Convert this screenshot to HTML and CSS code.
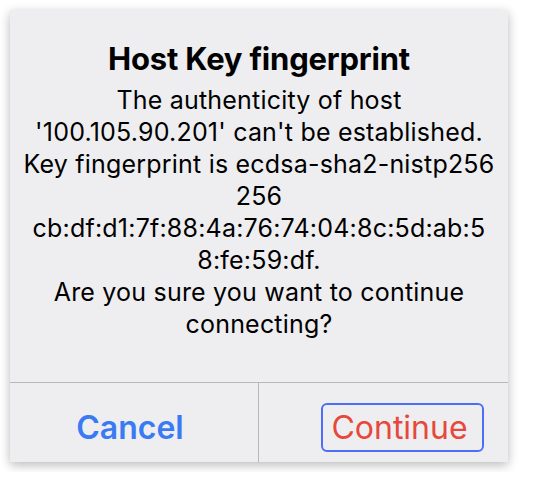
FILE: index.html
```html
<!DOCTYPE html>
<html lang="en">
<head>
    <meta charset="UTF-8">
    <meta name="viewport" content="width=device-width, initial-scale=1.0">
    <title>Host Key fingerprint</title>
    <link rel="stylesheet" href="styles.css">
</head>
<body>
    <div class="alert">
        <div class="alert-content">
            <h1 class="alert-title">Host Key fingerprint</h1>
            <p class="alert-message">
                The authenticity of host<br>
                '100.105.90.201' can't be established.<br>
                Key fingerprint is ecdsa-sha2-nistp256<br>
                256<br>
                cb:df:d1:7f:88:4a:76:74:04:8c:5d:ab:5<br>
                8:fe:59:df.<br>
                Are you sure you want to continue<br>
                connecting?
            </p>
        </div>
        <div class="alert-actions">
            <div class="action action-cancel">
                <button class="cancel-button">Cancel</button>
            </div>
            <div class="action action-continue">
                <button class="continue-button">Continue</button>
            </div>
        </div>
    </div>
</body>
</html>
```

FILE: styles.css
```css
body {
    margin: 0;
    padding: 10px;
    background-color: #ffffff;
    font-family: Inter, "Noto Sans", sans-serif;
}
.alert {
    width: 498px;
    height: 452px;
    background-color: #eeeef0;
    box-shadow: 0 3px 10px rgba(0,0,0,0.28);
    display: flex;
    flex-direction: column;
}
.alert-content {
    height: 372px;
    box-sizing: border-box;
    padding-top: 31px;
    text-align: center;
    color: #000;
}
.alert-title {
    margin: 0;
    font-size: 31px;
    line-height: 36px;
    font-weight: 700;
    letter-spacing: -0.2px;
}
.alert-message {
    margin: 7px 0 0;
    font-size: 25px;
    line-height: 32px;
    letter-spacing: 0.2px;
    white-space: nowrap;
}
.alert-actions {
    flex: 1;
    display: flex;
    border-top: 1px solid #b8b8bb;
}
.action {
    width: 50%;
    box-sizing: border-box;
    display: flex;
    align-items: center;
    justify-content: center;
    padding-top: 10px;
}
.action-cancel {
    border-right: 1px solid #b8b8bb;
}
button {
    font-family: Inter, "Noto Sans", sans-serif;
    font-size: 32px;
    background: none;
    border: none;
    cursor: pointer;
}
.cancel-button {
    color: #3a7bf4;
    font-weight: 600;
    margin-right: 8px;
}
.continue-button {
    color: #e6483c;
    border: 2px solid #4d6ef6;
    border-radius: 6px;
    height: 49px;
    padding: 0 14px 0 8px;
    margin-left: 38px;
}
```
